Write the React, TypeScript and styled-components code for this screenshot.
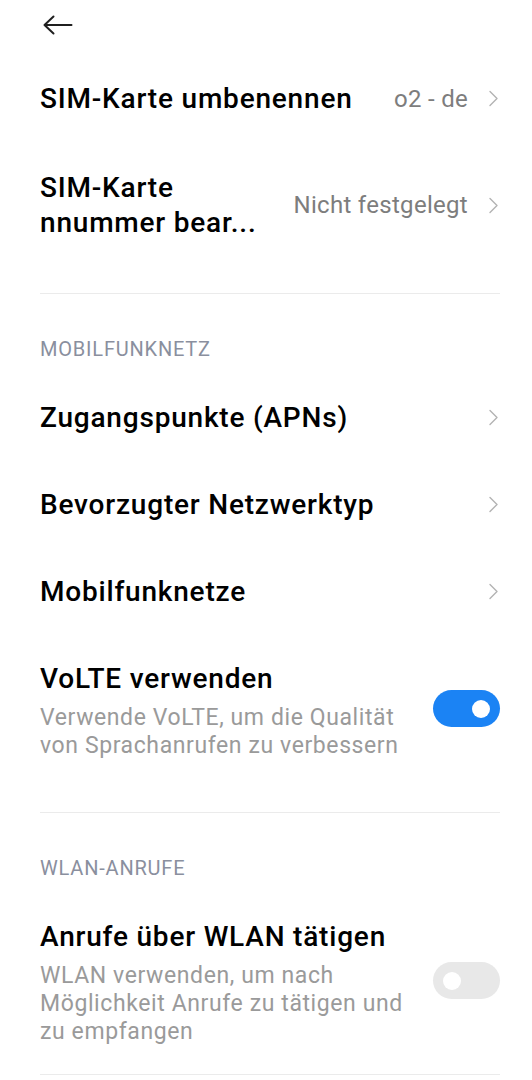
import React from "react";
import styled, { createGlobalStyle } from "styled-components";

const GlobalStyle = createGlobalStyle`
   html, body {
      margin: 0;
      padding: 0;
      background: #fff;
   }
   body {
      font-family: Roboto, "Noto Sans", Arial, sans-serif;
      -webkit-font-smoothing: antialiased;
   }
`;

const Page = styled.div`
   width: 532px;
   min-height: 1080px;
   background: #fff;
   padding: 0 32px 0 40px;
   box-sizing: border-box;
`;

const Header = styled.header`
   height: 55px;
   box-sizing: border-box;
   padding-top: 15px;
   display: flex;
   align-items: flex-start;
`;

const BackButton = styled.button`
   border: 0;
   background: none;
   padding: 0;
   margin: 0 0 0 3px;
   display: flex;
   color: #1f1f1f;
`;

const Section = styled.section<{ $last?: boolean }>`
   padding-bottom: ${({ $last }) => ($last ? "0" : "25px")};
   border-bottom: 1px solid #ebebeb;
`;

const SectionTitle = styled.h4`
   margin: 0;
   padding: 43px 0 13px;
   line-height: 24px;
   font-size: 20px;
   font-weight: 400;
   color: #8a8f9e;
   letter-spacing: 0.8px;
`;

const Row = styled.div<{ $bottom?: number }>`
   display: flex;
   align-items: center;
   padding: 28px 0 ${({ $bottom }) => $bottom ?? 28}px;
   gap: 16px;
`;

const TextBlock = styled.div`
   flex: 1;
   min-width: 0;
`;

const Title = styled.div<{ $multi?: boolean }>`
   font-size: 28px;
   font-weight: 500;
   letter-spacing: 0.8px;
   color: #000;
   line-height: ${({ $multi }) => ($multi ? "35px" : "31px")};
   white-space: nowrap;
`;

const Subtitle = styled.div`
   margin-top: 10px;
   font-size: 23px;
   letter-spacing: 0.6px;
   line-height: 28px;
   color: #9a9a9a;
`;

const Value = styled.span`
   font-size: 24px;
   letter-spacing: 0.3px;
   color: #7d7d7d;
   white-space: nowrap;
   margin-right: 4px;
`;

const ToggleTrack = styled.div<{ $on: boolean }>`
   flex: none;
   width: 67px;
   height: 37px;
   border-radius: 19px;
   background: ${({ $on }) => ($on ? "#1b83f4" : "#e8e8e8")};
   display: flex;
   align-items: center;
   justify-content: ${({ $on }) => ($on ? "flex-end" : "flex-start")};
   padding: 0 10px;
   box-sizing: border-box;
   margin-top: -6px;
`;

const ToggleKnob = styled.div`
   width: 18px;
   height: 18px;
   border-radius: 50%;
   background: #fff;
`;

const Chevron = () => (
   <svg width="11" height="17" viewBox="0 0 11 17" style={{ flex: "none", marginRight: 1 }}>
      <path d="M2 1.5 L9 8.5 L2 15.5" fill="none" stroke="#b3b3b3" strokeWidth="1.4" strokeLinecap="round" strokeLinejoin="round" />
   </svg>
);

interface NavRowProps {
   title: React.ReactNode;
   value?: string;
   multi?: boolean;
}

const NavRow: React.FC<NavRowProps> = ({ title, value, multi }) => (
   <Row>
      <TextBlock>
         <Title $multi={multi}>{title}</Title>
      </TextBlock>
      {value && <Value>{value}</Value>}
      <Chevron />
   </Row>
);

interface SwitchRowProps {
   title: string;
   subtitle: string;
   on: boolean;
   bottom?: number;
}

const SwitchRow: React.FC<SwitchRowProps> = ({ title, subtitle, on, bottom }) => (
   <Row $bottom={bottom}>
      <TextBlock>
         <Title>{title}</Title>
         <Subtitle>{subtitle}</Subtitle>
      </TextBlock>
      <ToggleTrack $on={on}>
         <ToggleKnob />
      </ToggleTrack>
   </Row>
);

export default function App() {
   return (
      <>
         <GlobalStyle />
         <Page>
            <Header>
               <BackButton aria-label="Zurück">
                  <svg width="30" height="20" viewBox="0 0 30 20">
                     <path d="M1.5 10 H28.5 M10.5 1.5 L1.5 10 L10.5 18.5" fill="none" stroke="currentColor" strokeWidth="2" strokeLinecap="round" strokeLinejoin="round" />
                  </svg>
               </BackButton>
            </Header>

            <Section>
               <NavRow title="SIM-Karte umbenennen" value="o2 - de" />
               <NavRow
                  multi
                  title={
                     <>
                        SIM-Karte
                        <br />
                        nnummer bear...
                     </>
                  }
                  value="Nicht festgelegt"
               />
            </Section>

            <Section>
               <SectionTitle>MOBILFUNKNETZ</SectionTitle>
               <NavRow title="Zugangspunkte (APNs)" />
               <NavRow title="Bevorzugter Netzwerktyp" />
               <NavRow title="Mobilfunknetze" />
               <SwitchRow
                  title="VoLTE verwenden"
                  subtitle="Verwende VoLTE, um die Qualität von Sprachanrufen zu verbessern"
                  on
                  bottom={27}
               />
            </Section>

            <Section $last>
               <SectionTitle>WLAN-ANRUFE</SectionTitle>
               <SwitchRow
                  title="Anrufe über WLAN tätigen"
                  subtitle="WLAN verwenden, um nach Möglichkeit Anrufe zu tätigen und zu empfangen"
                  on={false}
               />
            </Section>
         </Page>
      </>
   );
}
